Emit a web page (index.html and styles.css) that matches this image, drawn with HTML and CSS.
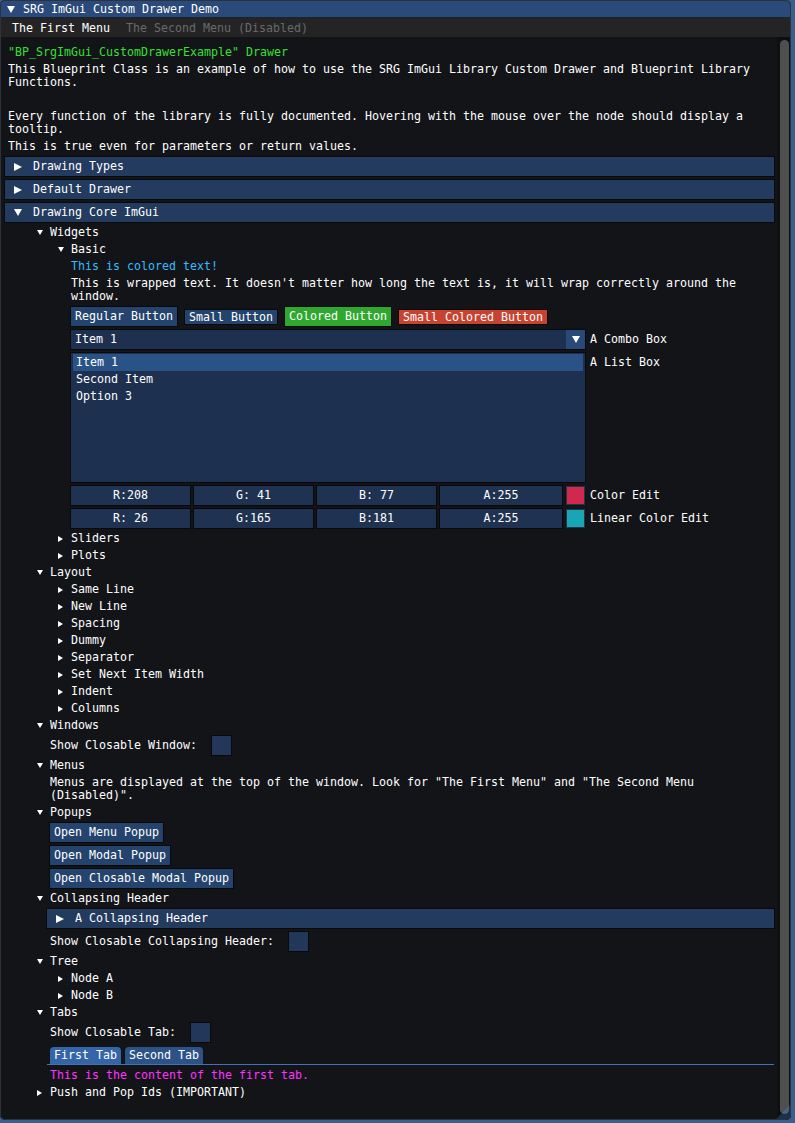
FILE: index.html
```html
<!DOCTYPE html>
<html>
<head>
<meta charset="utf-8">
<link rel="stylesheet" href="styles.css">
</head>
<body>
<div class="window">
  <div class="titlebar"><span class="tri-d-big title-arrow"></span><span>SRG ImGui Custom Drawer Demo</span></div>
  <div class="menubar"><span class="menu">The First Menu</span><span class="menu disabled">The Second Menu (Disabled)</span></div>
  <div class="body">
    <div class="content">
      <div class="line green">"BP_SrgImGui_CustomDrawerExample" Drawer</div>
      <div class="line">This Blueprint Class is an example of how to use the SRG ImGui Library Custom Drawer and Blueprint Library Functions.</div>
      <div class="line empty"></div>
      <div class="line">Every function of the library is fully documented. Hovering with the mouse over the node should display a tooltip.</div>
      <div class="line">This is true even for parameters or return values.</div>

      <div class="header"><span class="hbox"><span class="tri-r-big"></span></span><span>Drawing Types</span></div>
      <div class="header"><span class="hbox"><span class="tri-r-big"></span></span><span>Default Drawer</span></div>
      <div class="header"><span class="hbox"><span class="tri-d-big"></span></span><span>Drawing Core ImGui</span></div>

      <div class="group indent">
        <div class="node"><span class="abox"><span class="tri-d"></span></span>Widgets</div>
        <div class="group indent">
          <div class="node"><span class="abox"><span class="tri-d"></span></span>Basic</div>
          <div class="group indent">
            <div class="line cyan">This is colored text!</div>
            <div class="line">This is wrapped text. It doesn't matter how long the text is, it will wrap correctly around the window.</div>
            <div class="row buttons">
              <span class="btn">Regular Button</span>
              <span class="btn small">Small Button</span>
              <span class="btn green-btn">Colored Button</span>
              <span class="btn small red-btn">Small Colored Button</span>
            </div>
            <div class="row">
              <div class="combo"><span class="combo-text">Item 1</span><span class="combo-btn"><span class="tri-d-big"></span></span></div>
              <span class="label">A Combo Box</span>
            </div>
            <div class="row top">
              <div class="listbox">
                <div class="item selected">Item 1</div>
                <div class="item">Second Item</div>
                <div class="item">Option 3</div>
              </div>
              <span class="label pad">A List Box</span>
            </div>
            <div class="row">
              <div class="coloredit">
                <span class="cbox">R:208</span><span class="cbox">G: 41</span><span class="cbox">B: 77</span><span class="cbox wide">A:255</span><span class="swatch red-sw"></span>
              </div>
              <span class="label">Color Edit</span>
            </div>
            <div class="row">
              <div class="coloredit">
                <span class="cbox">R: 26</span><span class="cbox">G:165</span><span class="cbox">B:181</span><span class="cbox wide">A:255</span><span class="swatch teal-sw"></span>
              </div>
              <span class="label">Linear Color Edit</span>
            </div>
          </div>
          <div class="node"><span class="abox"><span class="tri-r"></span></span>Sliders</div>
          <div class="node"><span class="abox"><span class="tri-r"></span></span>Plots</div>
        </div>

        <div class="node"><span class="abox"><span class="tri-d"></span></span>Layout</div>
        <div class="group indent">
          <div class="node"><span class="abox"><span class="tri-r"></span></span>Same Line</div>
          <div class="node"><span class="abox"><span class="tri-r"></span></span>New Line</div>
          <div class="node"><span class="abox"><span class="tri-r"></span></span>Spacing</div>
          <div class="node"><span class="abox"><span class="tri-r"></span></span>Dummy</div>
          <div class="node"><span class="abox"><span class="tri-r"></span></span>Separator</div>
          <div class="node"><span class="abox"><span class="tri-r"></span></span>Set Next Item Width</div>
          <div class="node"><span class="abox"><span class="tri-r"></span></span>Indent</div>
          <div class="node"><span class="abox"><span class="tri-r"></span></span>Columns</div>
        </div>

        <div class="node"><span class="abox"><span class="tri-d"></span></span>Windows</div>
        <div class="group indent">
          <div class="row"><span>Show Closable Window:</span><span class="checkbox"></span></div>
        </div>

        <div class="node"><span class="abox"><span class="tri-d"></span></span>Menus</div>
        <div class="group indent">
          <div class="line">Menus are displayed at the top of the window. Look for "The First Menu" and "The Second Menu (Disabled)".</div>
        </div>

        <div class="node"><span class="abox"><span class="tri-d"></span></span>Popups</div>
        <div class="group indent">
          <span class="btn solo">Open Menu Popup</span>
          <span class="btn solo">Open Modal Popup</span>
          <span class="btn solo">Open Closable Modal Popup</span>
        </div>

        <div class="node"><span class="abox"><span class="tri-d"></span></span>Collapsing Header</div>
        <div class="group indent">
          <div class="header"><span class="hbox"><span class="tri-r-big"></span></span><span>A Collapsing Header</span></div>
          <div class="row"><span>Show Closable Collapsing Header:</span><span class="checkbox"></span></div>
        </div>

        <div class="node"><span class="abox"><span class="tri-d"></span></span>Tree</div>
        <div class="group indent">
          <div class="node"><span class="abox"><span class="tri-r"></span></span>Node A</div>
          <div class="node"><span class="abox"><span class="tri-r"></span></span>Node B</div>
        </div>

        <div class="node"><span class="abox"><span class="tri-d"></span></span>Tabs</div>
        <div class="group indent">
          <div class="row"><span>Show Closable Tab:</span><span class="checkbox"></span></div>
          <div class="tabbar">
            <span class="tab active">First Tab</span>
            <span class="tab">Second Tab</span>
          </div>
          <div class="line magenta">This is the content of the first tab.</div>
        </div>

        <div class="node"><span class="abox"><span class="tri-r"></span></span>Push and Pop Ids (IMPORTANT)</div>
      </div>
    </div>
    <div class="scrollbar"><div class="grab"></div></div>
  </div>
  <div class="grip"></div>
</div>
</body>
</html>
```
FILE: styles.css
```css
html, body {
  margin: 0;
  padding: 0;
}
body {
  background: #3b5f8c;
  width: 795px;
  height: 1123px;
  overflow: hidden;
  font-family: "DejaVu Sans Mono", "Liberation Mono", monospace;
  font-size: 11.63px;
  line-height: 13px;
  color: #ffffff;
}
.window {
  position: relative;
  width: 791px;
  height: 1120px;
  background: #131418;
  border-radius: 5px;
  overflow: hidden;
  display: flex;
  flex-direction: column;
}
.window::after {
  content: "";
  position: absolute;
  inset: 0;
  border: 1px solid #30323a;
  border-radius: 5px;
  pointer-events: none;
}
.titlebar {
  height: 18px;
  background: #294a7a;
  display: flex;
  align-items: flex-start;
  padding: 3px 0 0 7px;
  border-bottom: 1px solid #1c2230;
  box-sizing: border-box;
}
.title-arrow {
  margin: 3px 8px 0 0;
}
.menubar {
  height: 19px;
  background: #242424;
  display: flex;
  align-items: flex-start;
  padding: 4px 0 0 12px;
  box-sizing: border-box;
  gap: 16px;
}
.disabled {
  color: #6a6a6a;
}
.body {
  flex: 1;
  display: flex;
  min-height: 0;
}
.content {
  flex: 1;
  padding: 9px 7px 0 8px;
  display: flex;
  flex-direction: column;
  gap: 4px;
  min-width: 0;
}
.scrollbar {
  width: 14px;
  background: #0e0f11;
  padding: 3px 2px 6px 3px;
  box-sizing: border-box;
  display: flex;
}
.grab {
  flex: 1;
  background: #4f4f4f;
  border-radius: 5px;
}
.grip {
  position: absolute;
  right: 1px;
  bottom: 1px;
  width: 0;
  height: 0;
  border-left: 14px solid transparent;
  border-bottom: 14px solid rgba(66, 150, 250, 0.25);
}
.line {
  white-space: normal;
  min-height: 13px;
}
.green { color: #35e035; }
.cyan { color: #33bbff; }
.magenta { color: #ff33ff; }

.header {
  background: #223b5e;
  height: 19px;
  box-sizing: border-box;
  padding: 3px 0;
  display: flex;
  align-items: center;
  margin: 0 -4px 0 -3px;
  box-shadow: 0 0 0 1px rgba(0, 0, 0, 0.5);
}
.hbox {
  width: 28px;
  flex: none;
  display: flex;
  align-items: center;
  padding-left: 9px;
  box-sizing: border-box;
}
.tri-r-big {
  width: 0; height: 0;
  border-top: 4px solid transparent;
  border-bottom: 4px solid transparent;
  border-left: 8px solid #ffffff;
}
.tri-d-big {
  width: 0; height: 0;
  border-left: 4px solid transparent;
  border-right: 4px solid transparent;
  border-top: 7px solid #ffffff;
}
.tri-d {
  width: 0; height: 0;
  border-left: 3px solid transparent;
  border-right: 3px solid transparent;
  border-top: 5px solid #ffffff;
}
.tri-r {
  width: 0; height: 0;
  border-top: 3px solid transparent;
  border-bottom: 3px solid transparent;
  border-left: 5px solid #ffffff;
}
.group {
  display: flex;
  flex-direction: column;
  gap: 4px;
  align-items: stretch;
}
.indent {
  margin-left: 21px;
}
.node {
  display: flex;
  align-items: center;
  height: 13px;
}
.abox {
  width: 21px;
  flex: none;
  display: flex;
  align-items: center;
  padding-left: 8px;
  box-sizing: border-box;
}
.row {
  display: flex;
  align-items: center;
  min-height: 19px;
}
.row.top {
  align-items: flex-start;
}
.buttons {
  gap: 8px;
}
.btn {
  background: #25446d;
  padding: 3px 4px;
  line-height: 13px;
  white-space: pre;
  box-shadow: 0 0 0 1px rgba(0, 0, 0, 0.55);
}
.btn.small {
  padding: 0 4px;
  line-height: 14px;
}
.btn.solo {
  align-self: flex-start;
}
.green-btn { background: #2fa82f; }
.red-btn { background: #c8432f; }

.combo {
  width: 514px;
  height: 19px;
  display: flex;
  background: #1e3050;
  box-shadow: 0 0 0 1px rgba(0, 0, 0, 0.55);
}
.combo-text {
  flex: 1;
  padding: 3px 4px;
}
.combo-btn {
  width: 19px;
  background: #284a78;
  display: flex;
  align-items: center;
  justify-content: center;
}
.label {
  margin-left: 5px;
  white-space: pre;
}
.label.pad {
  padding-top: 3px;
}
.listbox {
  width: 514px;
  height: 129px;
  box-sizing: border-box;
  background: #1e3050;
  padding: 1px 2px;
  box-shadow: 0 0 0 1px rgba(0, 0, 0, 0.55);
}
.item {
  height: 17px;
  line-height: 17px;
  padding-left: 3px;
}
.item.selected {
  background: #295287;
}
.coloredit {
  width: 514px;
  display: flex;
  gap: 4px;
}
.cbox {
  width: 119px;
  height: 19px;
  line-height: 19px;
  text-align: center;
  background: #1f3252;
  white-space: pre;
  box-shadow: 0 0 0 1px rgba(0, 0, 0, 0.55);
}
.cbox.wide {
  width: 122px;
}
.swatch {
  width: 19px;
  height: 19px;
  box-sizing: border-box;
  border: 1px solid #24344d;
}
.red-sw { background: #d0294d; }
.teal-sw { background: #1aa5b5; }
.checkbox {
  width: 19px;
  height: 19px;
  margin-left: 15px;
  background: #22375a;
  box-shadow: 0 0 0 1px rgba(0, 0, 0, 0.55);
}
.tabbar {
  display: flex;
  gap: 4px;
  margin: 0 -4px 0 -3px;
  padding-left: 3px;
  border-bottom: 1px solid #4670b4;
  align-items: flex-end;
  height: 19px;
  box-sizing: border-box;
}
.tab {
  background: #2c5287;
  padding: 2px 4px 2px 4px;
  line-height: 13px;
  border-radius: 4px 4px 0 0;
}
.tab.active {
  background: #3465a8;
}
```
